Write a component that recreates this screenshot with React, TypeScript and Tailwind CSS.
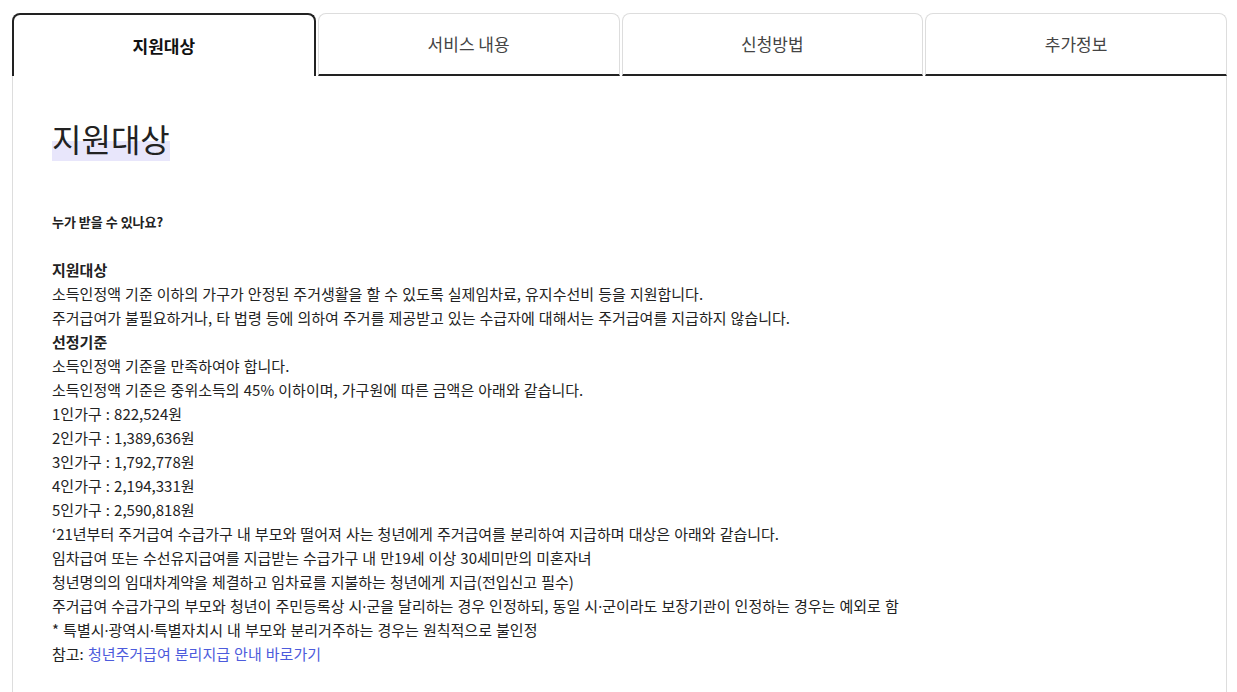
import React, { useState } from 'react';

const TABS = ['지원대상', '서비스 내용', '신청방법', '추가정보'];

const LINES = [
  '소득인정액 기준을 만족하여야 합니다.',
  '소득인정액 기준은 중위소득의 45% 이하이며, 가구원에 따른 금액은 아래와 같습니다.',
  '1인가구 : 822,524원',
  '2인가구 : 1,389,636원',
  '3인가구 : 1,792,778원',
  '4인가구 : 2,194,331원',
  '5인가구 : 2,590,818원',
  '‘21년부터 주거급여 수급가구 내 부모와 떨어져 사는 청년에게 주거급여를 분리하여 지급하며 대상은 아래와 같습니다.',
  '임차급여 또는 수선유지급여를 지급받는 수급가구 내 만19세 이상 30세미만의 미혼자녀',
  '청년명의의 임대차계약을 체결하고 임차료를 지불하는 청년에게 지급(전입신고 필수)',
  '주거급여 수급가구의 부모와 청년이 주민등록상 시·군을 달리하는 경우 인정하되, 동일 시·군이라도 보장기관이 인정하는 경우는 예외로 함',
  '* 특별시·광역시·특별자치시 내 부모와 분리거주하는 경우는 원칙적으로 불인정',
];

// the CJK font draws · full width; the page shows a narrow one
const Dotted = ({ text }: { text: string }) => {
  const parts = text.split('·');
  return (
    <>
      {parts.map((p, i) => (
        <React.Fragment key={i}>
          {i > 0 && <span className="font-['Noto_Sans',sans-serif]">·</span>}
          {p}
        </React.Fragment>
      ))}
    </>
  );
};

const App = () => {
  const [active, setActive] = useState(0);

  return (
    <div
      className="min-h-screen bg-white pt-[13px] pl-[12px] pr-[10px] text-[#222]"
      style={{ fontFamily: '"Noto Sans CJK KR", "Noto Sans", sans-serif' }}
    >
      <div className="flex gap-0.5">
        {TABS.map((tab, i) => (
          <button
            key={tab}
            onClick={() => setActive(i)}
            className={
              i === active
                ? 'flex-1 h-[63px] rounded-t-lg border-2 border-b-0 border-[#222] bg-white text-[17px] font-bold text-[#111]'
                : 'flex-1 h-[63px] rounded-t-lg border border-[#ddd] border-b-2 border-b-[#222] bg-white text-[17px] text-[#444]'
            }
          >
            {tab}
          </button>
        ))}
      </div>

      <div className="border-x border-[#ddd] px-[39px] pt-[42px] pb-10">
        <h2 className="text-[32px] leading-[40px] font-normal text-[#222]">
          <span className="bg-[linear-gradient(to_bottom,transparent_57%,#e8e6fb_57%)]">지원대상</span>
        </h2>

        <div className="mt-[52px] text-[15px] leading-[24px] text-[#222] [word-spacing:0.75px]">
          <p className="text-[13px] font-bold [word-spacing:0px]">누가 받을 수 있나요?</p>
          <p className="h-[24px]" />
          <p className="font-bold">지원대상</p>
          <p>소득인정액 기준 이하의 가구가 안정된 주거생활을 할 수 있도록 실제임차료, 유지수선비 등을 지원합니다.</p>
          <p>주거급여가 불필요하거나, 타 법령 등에 의하여 주거를 제공받고 있는 수급자에 대해서는 주거급여를 지급하지 않습니다.</p>
          <p className="font-bold">선정기준</p>
          {LINES.map((line) => (
            <p key={line}>
              <Dotted text={line} />
            </p>
          ))}
          <p>
            참고: <a href="#" className="text-[#4d5bdc]">청년주거급여 분리지급 안내 바로가기</a>
          </p>
        </div>
      </div>
    </div>
  );
};

export default App;
